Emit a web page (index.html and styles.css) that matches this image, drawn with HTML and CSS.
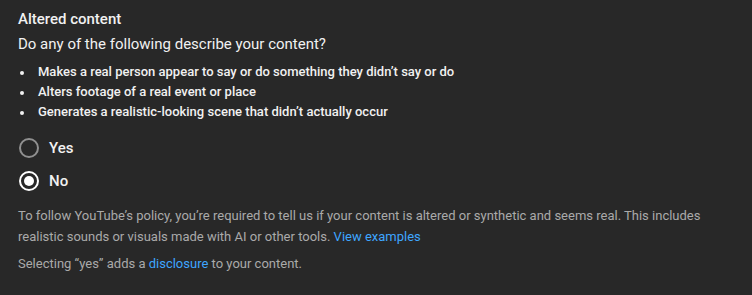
FILE: index.html
```html
<!DOCTYPE html>
<html lang="en">
<head>
    <meta charset="UTF-8">
    <meta name="viewport" content="width=device-width, initial-scale=1.0">
    <title>Altered content</title>
    <link rel="stylesheet" href="styles.css">
</head>
<body>
    <div class="panel">
        <div class="title">Altered content</div>
        <div class="question">Do any of the following describe your content?</div>

        <ul class="points">
            <li>Makes a real person appear to say or do something they didn’t say or do</li>
            <li>Alters footage of a real event or place</li>
            <li>Generates a realistic-looking scene that didn’t actually occur</li>
        </ul>

        <div class="choices">
            <label class="choice">
                <span class="radio"></span>
                <span class="choice-label">Yes</span>
            </label>
            <label class="choice">
                <span class="radio checked"></span>
                <span class="choice-label">No</span>
            </label>
        </div>

        <p class="note">To follow YouTube’s policy, you’re required to tell us if your content is altered or synthetic and seems real. This includes realistic sounds or visuals made with AI or other tools. <a href="#">View examples</a></p>
        <p class="note">Selecting “yes” adds a <a href="#">disclosure</a> to your content.</p>
    </div>
</body>
</html>
```

FILE: styles.css
```css
body {
    margin: 0;
    background: #282828;
    color: #f1f1f1;
    font-family: Roboto, "Noto Sans", Arial, sans-serif;
}
.panel {
    padding: 9px 18px 0 18px;
}
.title {
    font-size: 15px;
    line-height: 20px;
    font-weight: 500;
}
.question {
    margin-top: 4px;
    font-size: 15px;
    line-height: 22px;
}
.points {
    list-style: none;
    margin: 7px 0 0 0;
    padding: 0;
}
.points li {
    position: relative;
    padding-left: 20px;
    font-size: 13px;
    line-height: 20px;
    font-weight: 500;
}
.points li::before {
    content: "";
    position: absolute;
    left: 2px;
    top: 9px;
    width: 4px;
    height: 4px;
    border-radius: 50%;
    background: #f1f1f1;
}
.choices {
    margin-top: 10px;
    display: flex;
    flex-direction: column;
}
.choice {
    display: flex;
    align-items: center;
    gap: 10px;
    height: 32.5px;
}
.radio {
    box-sizing: border-box;
    width: 20px;
    height: 20px;
    margin-left: 1px;
    border: 2px solid #909090;
    border-radius: 50%;
    display: flex;
    align-items: center;
    justify-content: center;
}
.radio.checked {
    border-color: #fff;
}
.radio.checked::after {
    content: "";
    width: 10px;
    height: 10px;
    border-radius: 50%;
    background: #fff;
}
.choice-label {
    font-size: 15px;
    line-height: 20px;
    font-weight: 500;
}
.note {
    margin: 8px 0 0 0;
    font-size: 13px;
    line-height: 21px;
    color: #aaaaaa;
}
.note + .note {
    margin-top: 6px;
}
.note a {
    color: #3ea6ff;
    text-decoration: none;
}
```
